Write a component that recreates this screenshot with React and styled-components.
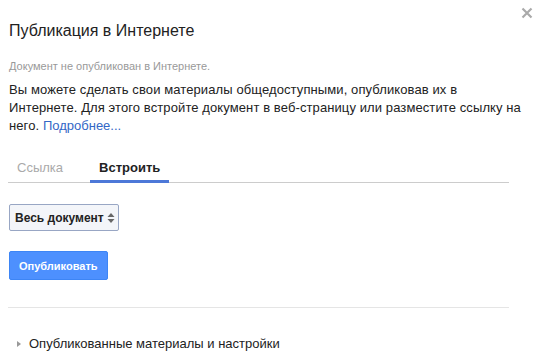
import React, { useState } from 'react'
import styled, { createGlobalStyle } from 'styled-components'

const GlobalStyle = createGlobalStyle`
  html, body {
    margin: 0;
    padding: 0;
    background: #fff;
  }
  body {
    font-family: "Liberation Sans", Arial, sans-serif;
    color: #222;
  }
`

const Dialog = styled.div`
  position: relative;
  width: 543px;
  height: 360px;
  box-sizing: border-box;
  padding: 20px 34px 0 8px;
  overflow: hidden;
`

const Close = styled.button`
  position: absolute;
  top: 6px;
  right: 9px;
  width: 14px;
  height: 14px;
  padding: 0;
  border: 0;
  background: none;
  cursor: pointer;
`

const Title = styled.h1`
  margin: 0 0 0 1px;
  font-size: 16px;
  font-weight: normal;
  line-height: 22px;
  color: #222;
`

const Status = styled.div`
  margin: 17px 0 0 1px;
  font-size: 11px;
  line-height: 14px;
  color: #999;
`

const Intro = styled.p`
  margin: 8px -20px 0 1px;
  font-size: 13px;
  line-height: 18px;
  letter-spacing: 0.1px;
  color: #222;
`

const More = styled.a`
  color: #3367c6;
  text-decoration: none;
  letter-spacing: 0;
`

const Tabs = styled.div`
  display: flex;
  margin-top: 24px;
  border-bottom: 1px solid #ccc;
`

const Tab = styled.div`
  padding: 0 9px 3px 9px;
  margin-right: 18px;
  font-size: 13px;
  line-height: 18px;
  font-weight: ${p => (p.$active ? 'bold' : 'normal')};
  color: ${p => (p.$active ? '#222' : '#aaa')};
  border-bottom: 3px solid ${p => (p.$active ? '#4d78d8' : 'transparent')};
  margin-bottom: -1px;
  cursor: pointer;
`

const Select = styled.div`
  display: inline-flex;
  align-items: center;
  gap: 3px;
  margin: 21px 0 0 1px;
  height: 25px;
  padding: 0 3px 0 5px;
  border: 1px solid #98a6c4;
  border-radius: 2px;
  background: #f3f5f9;
  font-size: 12px;
  font-weight: bold;
  color: #222;
`

const PublishButton = styled.button`
  display: block;
  margin: 20px 0 0 1px;
  height: 29px;
  padding: 0 9px;
  border: 1px solid #3d85f5;
  border-radius: 2px;
  background: #4d90fe;
  color: #fff;
  font-family: inherit;
  font-size: 11px;
  font-weight: bold;
`

const Divider = styled.hr`
  margin: 27px 0 0 0;
  border: 0;
  border-top: 1px solid #e5e5e5;
`

const Disclosure = styled.div`
  display: flex;
  align-items: center;
  gap: 8px;
  margin: 27px 0 0 9px;
  font-size: 13px;
  line-height: 18px;
  color: #222;
`

const Arrow = styled.span`
  width: 0;
  height: 0;
  border-top: 3px solid transparent;
  border-bottom: 3px solid transparent;
  border-left: 4px solid #999;
`

export default function App () {
    const [tab, setTab] = useState(1)

    return (
        <>
            <GlobalStyle />
            <Dialog>
                <Close aria-label="Закрыть">
                    <svg width="14" height="14" viewBox="0 0 14 14">
                        <path d="M2.5 2.5 L11.5 11.5 M11.5 2.5 L2.5 11.5" stroke="#aaa" strokeWidth="2.2" />
                    </svg>
                </Close>
                <Title>Публикация в Интернете</Title>
                <Status>Документ не опубликован в Интернете.</Status>
                <Intro>
                    Вы можете сделать свои материалы общедоступными, опубликовав их в<br />
                    Интернете. Для этого встройте документ в веб-страницу или разместите ссылку на<br />
                    него. <More href="#">Подробнее...</More>
                </Intro>
                <Tabs>
                    {['Ссылка', 'Встроить'].map((name, index) => (
                        <Tab key={name}
                             $active={tab === index}
                             onClick={() => setTab(index)}>{name}</Tab>
                    ))}
                </Tabs>
                <div>
                    <Select>
                        Весь документ
                        <svg width="8" height="12" viewBox="0 0 8 12">
                            <path d="M4 1 L7.5 5 H0.5 Z M4 11 L7.5 7 H0.5 Z" fill="#666" />
                        </svg>
                    </Select>
                </div>
                <PublishButton>Опубликовать</PublishButton>
                <Divider />
                <Disclosure>
                    <Arrow />
                    Опубликованные материалы и настройки
                </Disclosure>
            </Dialog>
        </>
    )
}
